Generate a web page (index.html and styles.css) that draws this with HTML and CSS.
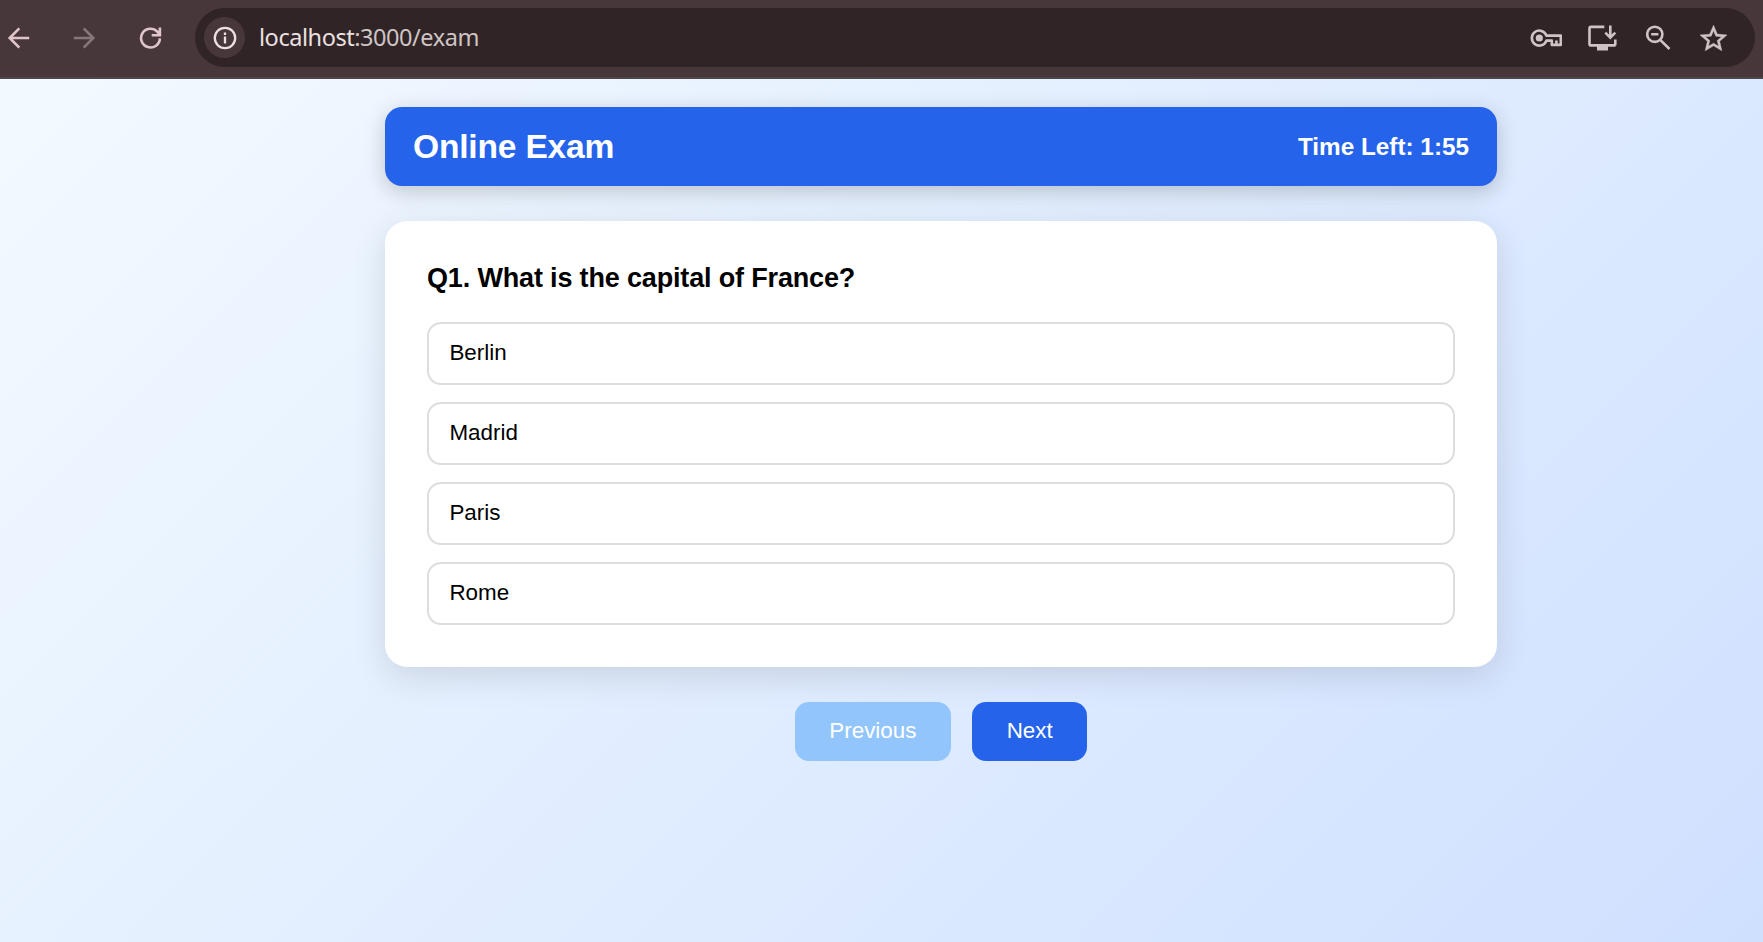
FILE: index.html
```
<!DOCTYPE html>
<html lang="en">
<head>
<meta charset="utf-8">
<title>Online Exam</title>
<link rel="stylesheet" href="styles.css">
</head>
<body>
<div class="toolbar">
  <div class="nav">
    <svg class="icon bright" width="24" height="24" viewBox="0 0 24 24"><path d="M22.2 12H3.3M12.3 2.4L2.7 12L12.3 21.6" /></svg>
    <svg class="icon dim" width="24" height="24" viewBox="0 0 24 24"><path d="M1.8 12H20.7M11.7 2.4L21.3 12L11.7 21.6" /></svg>
    <svg class="icon bright" width="24" height="24" viewBox="0 0 24 24"><path d="M20.9 12.4A9.4 9.4 0 1 1 18.2 5.5L20.5 8M20.9 1.6V9.3H12.7" /></svg>
  </div>
  <div class="address">
    <span class="info"><svg class="icon" width="24" height="24" viewBox="0 0 24 24"><circle cx="12" cy="12" r="10.2"/><path d="M12 10.6v6.8M12 6.6v2.4"/></svg></span>
    <span class="url"><span class="host">localhost</span>:3000/exam</span>
    <div class="actions">
      <svg class="icon" width="32" height="26" viewBox="0 0 32 26"><path d="M16.4 10.6A7.5 7.5 0 1 0 16.4 15.6H21.8V19.9H30.8V10.6Z" stroke-linejoin="round"/><circle cx="9.3" cy="13" r="3.6" class="solid"/><path d="M26.4 15.5V20"/></svg>
      <svg class="icon" width="30" height="26" viewBox="0 0 30 26"><path d="M16.3 1.9H3Q1.5 1.9 1.5 3.4V18.9Q1.5 20.4 3 20.4H25.8Q27.3 20.4 27.3 18.9V14.5M22.3 .5V12.5M17.3 7.6L22.3 12.6L27.3 7.6"/><path class="solid" d="M9 21h11v4.5H9z"/></svg>
      <svg class="icon zoom" width="25" height="26" viewBox="0 0 25 26"><circle cx="8.8" cy="9.3" r="7.6"/><path d="M5.2 9.3H12.4M14.2 14.8L23.5 24"/></svg>
      <svg class="star" width="27" height="26" viewBox="2 2 20 19"><path d="M22 9.24l-7.19-.62L12 2 9.19 8.63 2 9.24l5.46 4.73L5.82 21 12 17.27 18.18 21l-1.63-7.03L22 9.24zM12 15.4l-3.76 2.27 1-4.28-3.32-2.88 4.38-.38L12 6.1l1.71 4.04 4.38.38-3.32 2.88 1 4.28L12 15.4z"/></svg>
    </div>
  </div>
</div>
<main class="page">
  <header class="exam-header">
    <h1>Online Exam</h1>
    <div class="timer">Time Left: 1:55</div>
  </header>
  <section class="card">
    <h2>Q1. What is the capital of France?</h2>
    <div class="options">
      <div class="option">Berlin</div>
      <div class="option">Madrid</div>
      <div class="option">Paris</div>
      <div class="option">Rome</div>
    </div>
  </section>
  <div class="controls">
    <button class="btn" disabled>Previous</button>
    <button class="btn">Next</button>
  </div>
</main>
</body>
</html>
```
FILE: styles.css
```
* { box-sizing: border-box; }
body {
  margin: 0;
  height: 942px;
  overflow: hidden;
  display: flex;
  flex-direction: column;
  font-family: "Liberation Sans", Arial, sans-serif;
  font-size: 22.4px;
  color: #000;
}
.toolbar {
  flex: none;
  height: 79px;
  padding: 8px 8px 0 7px;
  display: flex;
  background: #47373a;
  border-bottom: 2px solid #4d4747;
}
.nav {
  display: flex;
  gap: 42px;
  width: 188px;
  height: 59px;
  align-items: center;
  flex: none;
}
.icon { fill: none; stroke: #cfc4c5; stroke-width: 2.6; display: block; flex: none; }
.solid { fill: #cfc4c5; stroke: none; }
.star { fill: #cfc4c5; stroke: #cfc4c5; stroke-width: .35; display: block; margin-left: 3px; }
.zoom { margin-left: 2px; }
.bright { stroke: #e0c6ca; }
.dim { stroke: #867779; margin-left: -1px; margin-right: 1px; }
.address {
  flex: 1;
  height: 59px;
  border-radius: 30px;
  background: #302426;
  display: flex;
  align-items: center;
  padding: 0 28px 0 9px;
}
.info {
  width: 41px;
  height: 41px;
  border-radius: 50%;
  background: #47373a;
  display: grid;
  place-items: center;
}
.info .icon { stroke: #ece0e1; stroke-width: 2.3; }
.url {
  margin-left: 14px;
  margin-bottom: 1px;
  font: 23.5px "Noto Sans", sans-serif;
  letter-spacing: -.45px;
  color: #cfc4c5;
}
.host { color: #ece0e1; }
.actions { margin-left: auto; display: flex; align-items: center; gap: 26px; }
.page {
  flex: 1;
  padding: 28px 0 0 385px;
  background: linear-gradient(135deg, #f3faff, #cfe0ff);
}
.exam-header {
  width: 1112px;
  height: 79px;
  padding: 0 28px;
  display: flex;
  justify-content: space-between;
  align-items: center;
  border-radius: 17px;
  background: #2563eb;
  color: #fff;
  box-shadow: 0 5.6px 21px rgba(0, 0, 0, .2);
}
h1 { margin: 0; font-size: 33.6px; letter-spacing: -.2px; }
.timer { font-size: 24.3px; font-weight: bold; }
.card {
  width: 1112px;
  height: 446px;
  margin-top: 35px;
  padding: 42px;
  border-radius: 22.4px;
  background: #fff;
  box-shadow: 0 8.4px 35px rgba(0, 0, 0, .12);
}
h2 { margin: 0 0 28px; font-size: 27px; line-height: 31px; letter-spacing: -.16px; }
.options { display: grid; gap: 17px; }
.option {
  height: 63px;
  padding: 0 20.4px 2px;
  display: flex;
  align-items: center;
  border: 2px solid #ddd;
  border-radius: 14px;
}
.controls {
  width: 1112px;
  margin-top: 35px;
  display: flex;
  justify-content: center;
  gap: 21px;
}
.btn {
  height: 59px;
  padding: 0 34.6px 2px;
  border: 0;
  border-radius: 14px;
  background: #2563eb;
  color: #fff;
  font: inherit;
}
.btn:disabled { background: #93c5fd; }
```
